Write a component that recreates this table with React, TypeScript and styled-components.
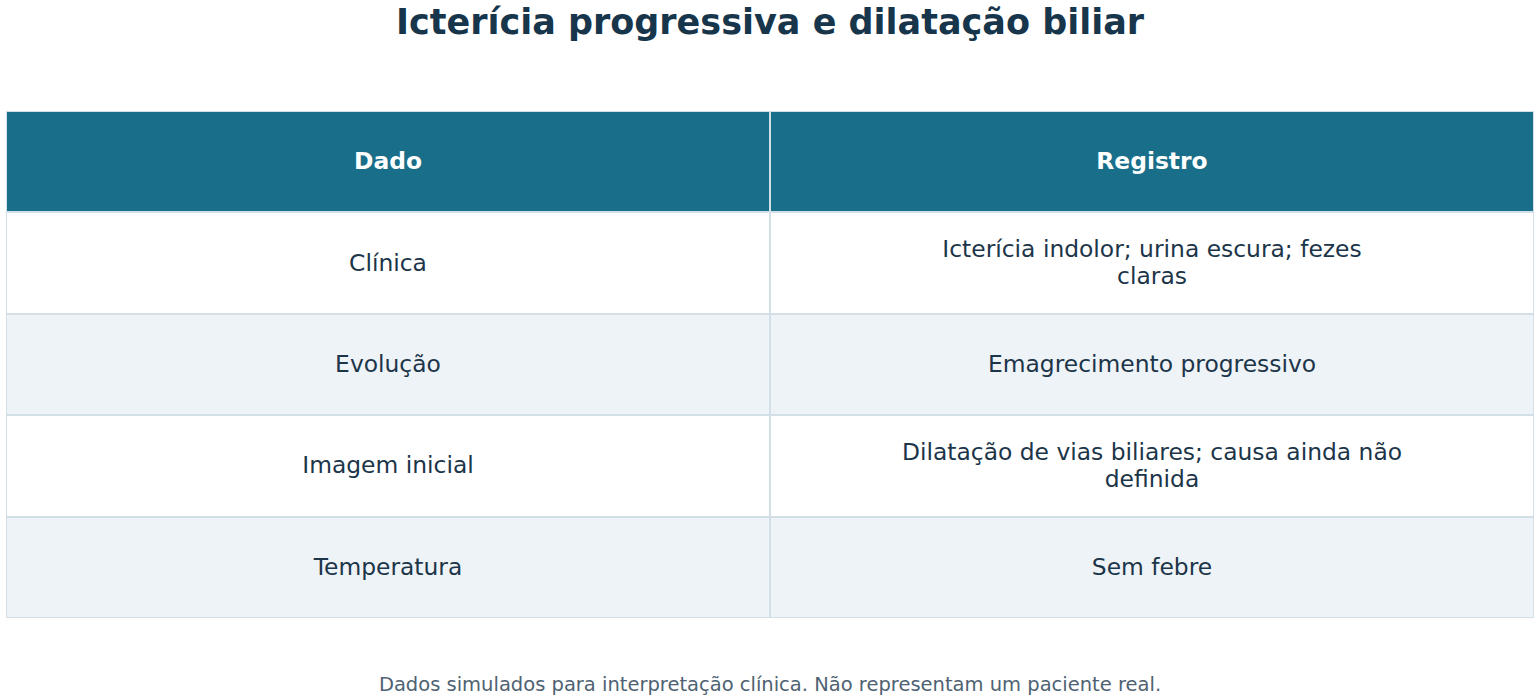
import React from "react";
import styled, { createGlobalStyle } from "styled-components";

const Global = createGlobalStyle`
  html, body { margin: 0; padding: 0; background: #ffffff; }
  body { font-family: "DejaVu Sans", "Liberation Sans", sans-serif; }
`;

const Page = styled.div`
  width: 1540px;
  height: 700px;
  padding: 0 6px;
  box-sizing: border-box;
  display: flex;
  flex-direction: column;
  overflow: hidden;
`;

const Title = styled.h1`
  margin: 0;
  height: 46px;
  line-height: 46px;
  text-align: center;
  font-size: 35px;
  font-weight: 700;
  color: #17354b;
  margin-top: -1px;
`;

const Table = styled.div`
  margin-top: 66px;
  width: 1528px;
  display: grid;
  grid-template-columns: 1fr 1fr;
`;

const Cell = styled.div<{ $head?: boolean; $alt?: boolean }>`
  height: 99.4px;
  border: 1px solid #d3dfe7;
  display: flex;
  flex-direction: column;
  align-items: center;
  justify-content: center;
  text-align: center;
  background: ${(p) => (p.$head ? "#196e89" : p.$alt ? "#eef3f7" : "#ffffff")};
  color: ${(p) => (p.$head ? "#ffffff" : "#1c3549")};
  font-weight: ${(p) => (p.$head ? 700 : 400)};
  font-size: 23.4px;
  line-height: 27px;
`;

const Note = styled.p`
  margin: 0;
  margin-top: 55px;
  text-align: center;
  font-size: 19.5px;
  color: #4e6272;
`;

const rows: [string, string[]][] = [
  ["Clínica", ["Icterícia indolor; urina escura; fezes", "claras"]],
  ["Evolução", ["Emagrecimento progressivo"]],
  ["Imagem inicial", ["Dilatação de vias biliares; causa ainda não", "definida"]],
  ["Temperatura", ["Sem febre"]],
];

export default function App() {
  return (
    <>
      <Global />
      <Page>
        <Title>Icterícia progressiva e dilatação biliar</Title>
        <Table>
          <Cell $head>Dado</Cell>
          <Cell $head>Registro</Cell>
          {rows.map(([a, b], i) => (
            <React.Fragment key={a}>
              <Cell $alt={i % 2 === 1}>{a}</Cell>
              <Cell $alt={i % 2 === 1}>
                {b.map((line) => (
                  <span key={line}>{line}</span>
                ))}
              </Cell>
            </React.Fragment>
          ))}
        </Table>
        <Note>Dados simulados para interpretação clínica. Não representam um paciente real.</Note>
      </Page>
    </>
  );
}
